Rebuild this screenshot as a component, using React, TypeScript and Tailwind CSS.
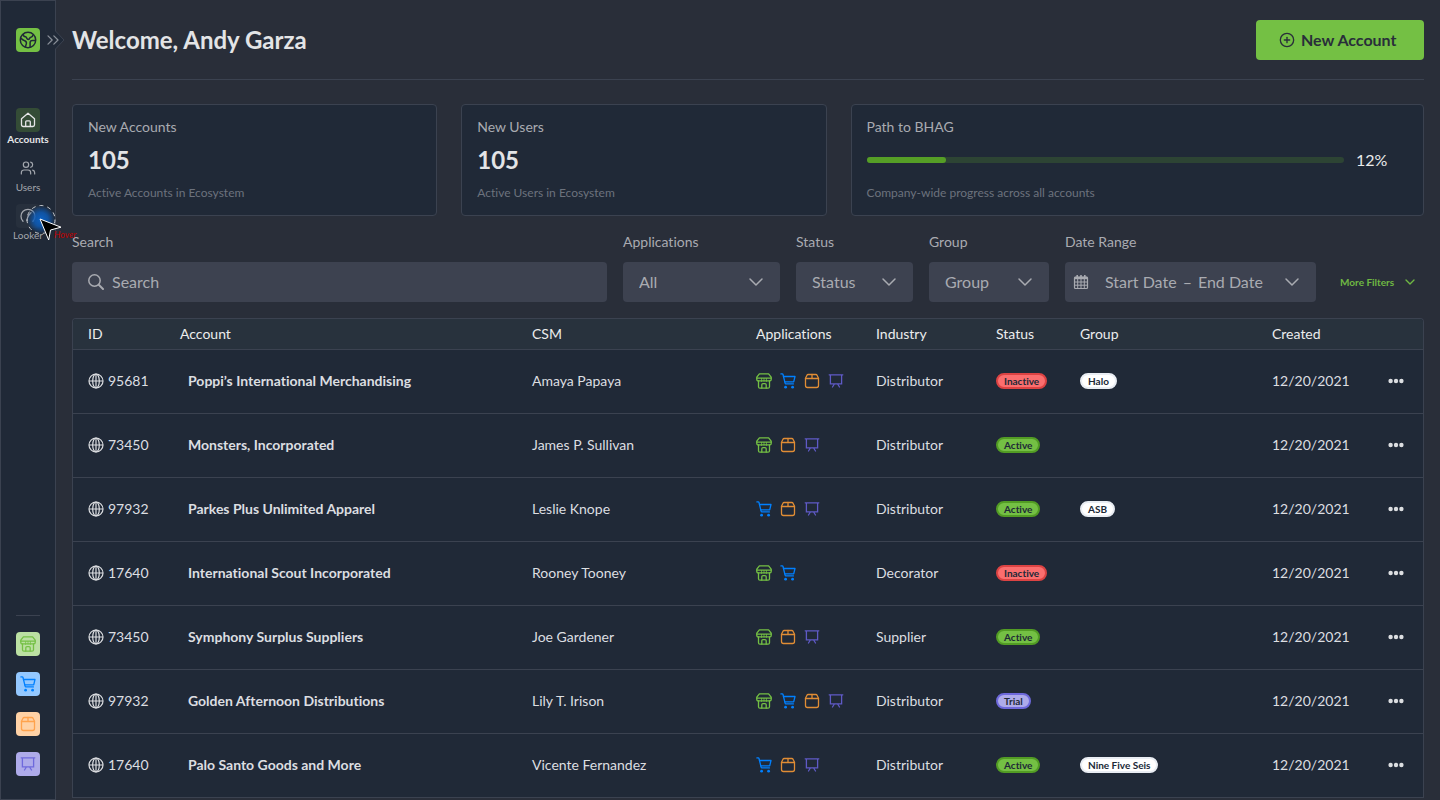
import type { ReactNode } from "react";
import { ChevronDown, ChevronsRight, CirclePlus, Users } from "lucide-react";

type IconProps = { className?: string };

const StoreIcon = ({ className }: IconProps) => (
  <svg viewBox="0 0 16 16" fill="none" stroke="currentColor" strokeWidth="1.3" strokeLinecap="round" strokeLinejoin="round" className={className}>
    <path d="M3.4.8h9.2l2.600 3.400v1H.8v-1z" />
    <path d="M.8 5.200v1.300A1.300 1.300 0 0 0 2.100 7.800h11.800a1.300 1.300 0 0 0 1.300-1.300V5.200" />
    <path d="M2.500 7.800v5.900c0 .9.600 1.500 1.500 1.500h8c.9 0 1.500-.6 1.500-1.500V7.800" />
    <path d="M5.800 15v-3.200c0-.7.500-1.200 1.200-1.200h2c.7 0 1.200.5 1.200 1.200V15" />
    <path d="M5.600 5.500v3M8 5.500v2.600M10.400 5.500v3" strokeWidth=".8" />
  </svg>
);

const CartIcon = ({ className }: IconProps) => (
  <svg viewBox="0 0 16 16" fill="none" stroke="currentColor" strokeWidth="1.3" strokeLinecap="round" strokeLinejoin="round" className={className}>
    <path d="M.9.9h1.300c.4 0 .7.2.8.6l2.100 8.700c.1.400.4.700.8.700h7.500" />
    <path d="M3.500 3.500h11.500l-1.300 5.300H4.800" />
    <circle cx="5.600" cy="14.200" r="1.400" fill="currentColor" stroke="none" />
    <circle cx="12.600" cy="14.200" r="1.400" fill="currentColor" stroke="none" />
  </svg>
);

const BoxIcon = ({ className }: IconProps) => (
  <svg viewBox="0 0 16 16" fill="none" stroke="currentColor" strokeWidth="1.3" strokeLinecap="round" strokeLinejoin="round" className={className}>
    <path d="M4.200 1.500h7.600a1.500 1.500 0 0 1 1.200.7l1.500 3.100v7.200a2 2 0 0 1-2 2h-9a2 2 0 0 1-2-2V5.300L3 2.200a1.500 1.500 0 0 1 1.200-.7z" />
    <path d="M1.500 5.500h13M8 1.500v4" />
  </svg>
);

const BoardIcon = ({ className }: IconProps) => (
  <svg viewBox="0 0 16 16" fill="none" stroke="currentColor" strokeWidth="1.3" strokeLinecap="round" className={className}>
    <path d="M1.200 1.800h13.600M2.400 1.800v9h11.200v-9M6.400 11l-1.900 3M9.600 11l1.900 3" />
  </svg>
);

const GlobeIcon = ({ className }: IconProps) => (
  <svg viewBox="0 0 16 16" fill="none" stroke="currentColor" strokeWidth="1.2" className={className}>
    <circle cx="8" cy="8" r="7" />
    <ellipse cx="8" cy="8" rx="3.300" ry="7" />
    <path d="M1 8h14M8 1v14" />
  </svg>
);

const LogoIcon = ({ className }: IconProps) => (
  <svg viewBox="0 0 18 18" fill="none" stroke="currentColor" strokeWidth="1.5" strokeLinejoin="round" className={className}>
    <circle cx="9" cy="9" r="7.700" />
    <path d="M4.200 3c0 1.600.8 2.600 2.300 2.800 1.500.3 1 2.700 2.700 2.700s1-2 2.700-2.300c1.300-.2 1.900-1 2-2.400" />
    <path d="M1.400 7.400c1.600.1 2 1.400 3.300 1.900 1.700.5 3 1.500 2.700 3.200-.2 1.400-1 2-.9 3.800" />
    <path d="M16.700 9.600h-3.200c-1.500 0-2.400.8-2.400 2.200v4.600" />
  </svg>
);

const HouseIcon = ({ className }: IconProps) => (
  <svg viewBox="0 0 16 16" fill="none" stroke="currentColor" strokeWidth="1.3" strokeLinecap="round" strokeLinejoin="round" className={className}>
    <path d="M1.500 6.800 8 1.200l6.500 5.600v6a1.700 1.700 0 0 1-1.700 1.700H3.200a1.700 1.700 0 0 1-1.700-1.700z" />
    <path d="M5.700 14.300V9.800c0-.6.400-1 1-1h2.600c.6 0 1 .4 1 1v4.500" />
  </svg>
);

const GaugeIcon = ({ className }: IconProps) => (
  <svg viewBox="0 0 16 16" fill="none" stroke="currentColor" strokeWidth="1.3" strokeLinecap="round" className={className}>
    <path d="M3 13.200A7 7 0 1 1 13 13.200" />
    <path d="M11 4.800C8.600 7 7.200 9 7 12.600" />
  </svg>
);

const SearchIcon = ({ className }: IconProps) => (
  <svg viewBox="0 0 16 16" fill="none" stroke="currentColor" strokeLinecap="round" className={className}>
    <circle cx="6.500" cy="6.500" r="5.700" strokeWidth="1.500" />
    <path d="m11 11 4 4" strokeWidth="2" />
  </svg>
);

const CalendarIcon = ({ className }: IconProps) => (
  <svg viewBox="0 0 16 16" fill="none" stroke="currentColor" className={className}>
    <rect x="1.500" y="3" width="13" height="11.500" rx="1" strokeWidth="1.200" />
    <path d="M1.500 4h13" strokeWidth="2.400" />
    <path d="M4.200 1v3M8 1v3M11.800 1v3" strokeWidth="1.600" />
    <path d="M1.500 8h13M1.500 11.200h13M4.700 5v9.500M8 5v9.500M11.300 5v9.500" />
  </svg>
);

type AppName = "store" | "cart" | "box" | "board";

const appIcons = {
  store: { label: "Store", Icon: StoreIcon, color: "text-[#74c044]", tile: "bg-[#bbe0a2] text-[#74c044]" },
  cart: { label: "Cart", Icon: CartIcon, color: "text-[#0080ff]", tile: "bg-[#94c8ff] text-[#0080ff]" },
  box: { label: "Box", Icon: BoxIcon, color: "text-[#e08d35]", tile: "bg-[#ffd2a6] text-[#ffa34d]" },
  board: { label: "Board", Icon: BoardIcon, color: "text-[#5f5ac6]", tile: "bg-[#aeabea] text-[#6e69dc]" },
};

const appNames: AppName[] = ["store", "cart", "box", "board"];

const statusStyles = {
  Active: "bg-[#74c044] border-[#529c24]",
  Inactive: "bg-[#fb6e6e] border-[#dc4343]",
  Trial: "bg-[#aeabea] border-[#6e69dc]",
};

type Account = {
  id: string;
  name: string;
  csm: string;
  apps: AppName[];
  industry: string;
  status: keyof typeof statusStyles;
  group?: string;
  created: string;
};

const accounts: Account[] = [
  { id: "95681", name: "Poppi’s International Merchandising", csm: "Amaya Papaya", apps: ["store", "cart", "box", "board"], industry: "Distributor", status: "Inactive", group: "Halo", created: "12/20/2021" },
  { id: "73450", name: "Monsters, Incorporated", csm: "James P. Sullivan", apps: ["store", "box", "board"], industry: "Distributor", status: "Active", created: "12/20/2021" },
  { id: "97932", name: "Parkes Plus Unlimited Apparel", csm: "Leslie Knope", apps: ["cart", "box", "board"], industry: "Distributor", status: "Active", group: "ASB", created: "12/20/2021" },
  { id: "17640", name: "International Scout Incorporated", csm: "Rooney Tooney", apps: ["store", "cart"], industry: "Decorator", status: "Inactive", created: "12/20/2021" },
  { id: "73450", name: "Symphony Surplus Suppliers", csm: "Joe Gardener", apps: ["store", "box", "board"], industry: "Supplier", status: "Active", created: "12/20/2021" },
  { id: "97932", name: "Golden Afternoon Distributions", csm: "Lily T. Irison", apps: ["store", "cart", "box", "board"], industry: "Distributor", status: "Trial", created: "12/20/2021" },
  { id: "17640", name: "Palo Santo Goods and More", csm: "Vicente Fernandez", apps: ["cart", "box", "board"], industry: "Distributor", status: "Active", group: "Nine Five Seis", created: "12/20/2021" },
];

function Badge({ className, children }: { className: string; children: ReactNode }) {
  return (
    <span className={`inline-flex h-4 items-center rounded-full border-2 px-1.5 text-[10px] leading-3 font-bold text-[#202937] ${className}`}>
      {children}
    </span>
  );
}

function NavItem({ label, tile, active, children }: { label: string; tile: string; active?: boolean; children: ReactNode }) {
  return (
    <a href="#" className={`flex flex-col items-center text-[10px] leading-3.5 ${active ? "font-bold text-[#e6e6e8]" : "text-[#a3a7ae]"}`}>
      <span className={`flex size-6 items-center justify-center rounded ${tile}`}>{children}</span>
      {label}
    </a>
  );
}

function Pointer() {
  return (
    <div className="pointer-events-none absolute top-[203px] left-[23px] z-10">
      <svg width="40" height="40" viewBox="0 0 40 40">
        <defs>
          <radialGradient id="glow">
            <stop offset="0" stopColor="#0d62c4" />
            <stop offset=".5" stopColor="#0d5ab4" stopOpacity=".85" />
            <stop offset="1" stopColor="#0d5ab4" stopOpacity="0" />
          </radialGradient>
        </defs>
        <circle cx="17" cy="15.500" r="14" fill="url(#glow)" />
        <circle cx="17" cy="15.500" r="14" fill="none" stroke="#d5d8dc" strokeWidth=".9" strokeDasharray="4 4" />
        <path d="M16 15 37 23.200 26.500 26 24.700 36z" fill="#000" stroke="#fff" strokeWidth="1" />
      </svg>
      <span className="absolute top-[25px] left-[30px] text-[9px] leading-3 text-[#c00000] italic">Hover</span>
    </div>
  );
}

function Sidebar() {
  return (
    <aside className="relative flex w-14 shrink-0 flex-col items-center justify-between border border-[#3b4250] bg-[#202937] pt-[27px] pb-[23px]">
      <div className="flex flex-col items-center">
        <a href="#" aria-label="Home" className="flex size-6 items-center justify-center rounded bg-[#74c044] text-[#202937]">
          <LogoIcon className="size-[18px]" />
        </a>
        <button type="button" aria-label="Expand menu" className="absolute top-[29px] -right-2.5 h-5 w-[18px] text-[#8a9099]">
          <svg width="18" height="20" viewBox="0 0 18 20" className="absolute inset-0">
            <path d="M0 1h8.500l8.500 9-8.500 9H0z" fill="#202937" />
            <path d="M8.500 0v1l8.500 9-8.500 9v1" fill="none" stroke="#3b4250" />
          </svg>
          <ChevronsRight className="absolute top-0 -left-1 size-5" strokeWidth={1.5} />
        </button>
        <nav className="mt-14 flex flex-col items-center gap-2.5">
          <NavItem label="Accounts" tile="bg-[#344c36] text-[#e6e6e8]" active>
            <HouseIcon className="size-4" />
          </NavItem>
          <NavItem label="Users" tile="">
            <Users className="size-4" strokeWidth={1.8} />
          </NavItem>
          <NavItem label="Looker" tile="bg-[#27303d]">
            <GaugeIcon className="size-4" />
          </NavItem>
        </nav>
      </div>
      <div className="flex flex-col gap-4 border-t border-[#3b4250] pt-4">
        {appNames.map((app) => {
          const { Icon, label, tile } = appIcons[app];
          return (
            <a key={app} href="#" aria-label={label} className={`flex size-6 items-center justify-center rounded ${tile}`}>
              <Icon className="size-4" />
            </a>
          );
        })}
      </div>
      <Pointer />
    </aside>
  );
}

function Card({ title, note, children }: { title: string; note: string; children: ReactNode }) {
  return (
    <section className="rounded border border-[#3b4250] bg-[#202937] px-[15px] py-3">
      <h2 className="text-sm text-[#a9abb1]">{title}</h2>
      <div className="my-2 flex h-[30px] items-center">{children}</div>
      <p className="text-xs leading-5 text-[#6c727d]">{note}</p>
    </section>
  );
}

function SelectField({ id, label, value, width }: { id: string; label: string; value: string; width: string }) {
  return (
    <div className={width}>
      <label htmlFor={id} className="block text-sm text-[#a9abb1]">{label}</label>
      <div className="relative mt-2.5">
        <select id={id} className="h-10 w-full appearance-none rounded bg-[#3d4250] px-4 text-base text-[#a9abb1]">
          <option>{value}</option>
        </select>
        <ChevronDown className="pointer-events-none absolute top-2 right-3 size-6 text-[#a9abb1]" strokeWidth={1.5} />
      </div>
    </div>
  );
}

function Filters() {
  return (
    <form className="mt-4 flex items-end gap-4">
      <div className="flex-1">
        <label htmlFor="search" className="block text-sm text-[#a9abb1]">Search</label>
        <div className="mt-2.5 flex h-10 items-center gap-2 rounded bg-[#3d4250] px-4 text-[#a9abb1]">
          <SearchIcon className="size-4" />
          <input id="search" placeholder="Search" className="min-w-0 flex-1 bg-transparent text-base outline-none placeholder:text-[#a9abb1]" />
        </div>
      </div>
      <SelectField id="applications" label="Applications" value="All" width="w-[157px]" />
      <SelectField id="status" label="Status" value="Status" width="w-[117px]" />
      <SelectField id="group" label="Group" value="Group" width="w-[120px]" />
      <div className="w-[251px]">
        <label htmlFor="dates" className="block text-sm text-[#a9abb1]">Date Range</label>
        <button id="dates" type="button" className="mt-2.5 flex h-10 w-full items-center rounded bg-[#3d4250] pr-3 pl-2 text-base text-[#a9abb1]">
          <CalendarIcon className="mr-4 size-4" />
          <span className="flex flex-1 gap-1.5 whitespace-nowrap">
            <span>Start Date</span>
            <span>–</span>
            <span>End Date</span>
          </span>
          <ChevronDown className="size-6" strokeWidth={1.5} />
        </button>
      </div>
      <button type="button" className="flex h-10 w-23 items-center justify-between pr-1.5 pl-2 text-[10px] font-bold whitespace-nowrap text-[#6fb843]">
        More Filters
        <ChevronDown className="size-4" strokeWidth={2} />
      </button>
    </form>
  );
}

function AccountsTable() {
  return (
    <div className="mt-4 overflow-hidden rounded-t border border-b-0 border-[#3b4250] bg-[#202937]">
      <table className="w-full table-fixed text-left text-sm text-[#dcdee1]">
        <thead className="bg-[#28323d] text-[#eceded]">
          <tr className="h-[30px] border-b border-[#3b4250] *:px-2 *:py-0 *:font-normal">
            <th className="w-[99px] pl-[15px]!">ID</th>
            <th>Account</th>
            <th className="w-[224px]">CSM</th>
            <th className="w-[120px]">Applications</th>
            <th className="w-[120px]">Industry</th>
            <th className="w-[84px]">Status</th>
            <th className="w-[192px]">Group</th>
            <th className="w-[116px]">Created</th>
            <th className="w-[43px]" aria-label="Actions" />
          </tr>
        </thead>
        <tbody>
          {accounts.map((account, i) => (
            <tr key={i} className="h-16 border-b border-[#3b4250] *:px-2 *:py-0">
              <td className="pl-[15px]!">
                <div className="flex items-center gap-1">
                  <GlobeIcon className="size-4" />
                  {account.id}
                </div>
              </td>
              <td className="pl-4! font-bold">{account.name}</td>
              <td>{account.csm}</td>
              <td>
                <div className="flex gap-2">
                  {account.apps.map((app) => {
                    const { Icon, color } = appIcons[app];
                    return <Icon key={app} className={`size-4 ${color}`} />;
                  })}
                </div>
              </td>
              <td>{account.industry}</td>
              <td>
                <div className="flex">
                  <Badge className={statusStyles[account.status]}>{account.status}</Badge>
                </div>
              </td>
              <td>
                <div className="flex">
                  {account.group && <Badge className="border-[#e9edf3] bg-white">{account.group}</Badge>}
                </div>
              </td>
              <td>{account.created}</td>
              <td>
                <button type="button" aria-label="More actions" className="flex">
                  <svg viewBox="0 0 16 16" fill="currentColor" className="size-4">
                    <circle cx="2.600" cy="8" r="2.200" />
                    <circle cx="8" cy="8" r="2.200" />
                    <circle cx="13.400" cy="8" r="2.200" />
                  </svg>
                </button>
              </td>
            </tr>
          ))}
        </tbody>
      </table>
    </div>
  );
}

export default function App() {
  return (
    <div className="flex min-h-screen bg-[#292e39] font-['Lato',sans-serif] [font-variant-ligatures:none]">
      <Sidebar />
      <main className="min-w-0 flex-1 px-4">
        <header className="flex h-20 items-center justify-between border-b border-[#3b4250]">
          <h1 className="text-2xl font-bold text-[#e3e4e6]">Welcome, Andy Garza</h1>
          <button type="button" className="flex h-10 w-42 items-center gap-1.5 rounded bg-[#74c044] pl-[23px] text-base font-bold text-[#292e3a]">
            <CirclePlus className="size-4" strokeWidth={2} />
            New Account
          </button>
        </header>
        <div className="mt-6 grid grid-cols-[365fr_365fr_573fr] gap-6">
          <Card title="New Accounts" note="Active Accounts in Ecosystem">
            <span className="text-2xl font-bold text-[#e3e4e6]">105</span>
          </Card>
          <Card title="New Users" note="Active Users in Ecosystem">
            <span className="text-2xl font-bold text-[#e3e4e6]">105</span>
          </Card>
          <Card title="Path to BHAG" note="Company-wide progress across all accounts">
            <div role="progressbar" aria-label="Path to BHAG" aria-valuenow={12} className="h-1.5 flex-1 rounded-full bg-[#2d4434]">
              <div className="h-full w-1/6 rounded-full bg-[#559e26]" />
            </div>
            <span className="w-16 pl-3 text-base text-[#eceded]">12%</span>
          </Card>
        </div>
        <Filters />
        <AccountsTable />
      </main>
    </div>
  );
}
